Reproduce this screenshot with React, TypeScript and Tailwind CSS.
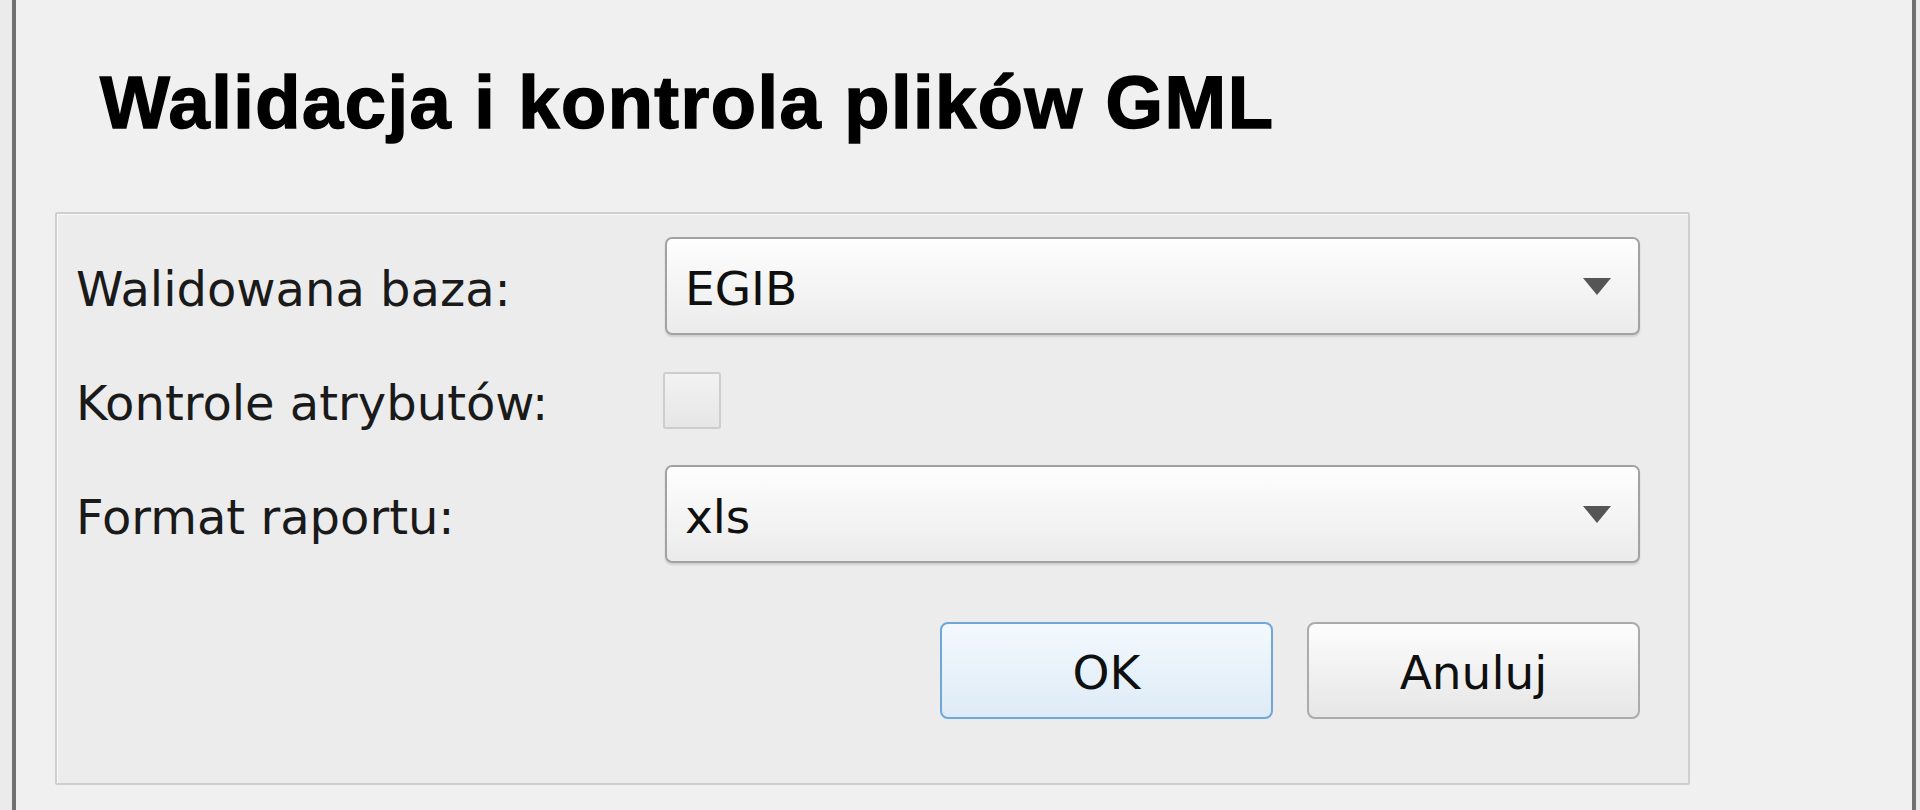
import { ChevronDown } from "lucide-react";

// Drop-down box in the classic Windows look
function Combo({ value }: { value: string }) {
  return (
    <div className="flex h-[98px] w-full items-center justify-between rounded-[7px] border-2 border-[#a2a2a2] bg-gradient-to-b from-[#fefefe] to-[#ebebeb] pl-[18px] pr-[27px] shadow-[0_2px_2px_rgba(0,0,0,0.12)]">
      <span className="mt-[4px] text-[47px] leading-none text-[#0f0f0f]">{value}</span>
      <svg width="28" height="17" viewBox="0 0 28 17">
        <polygon points="0,0 28,0 14,17" fill="#555555" />
      </svg>
    </div>
  );
}

export default function App() {
  return (
    <div
      className="h-[810px] w-[1920px] overflow-hidden bg-[#ebebeb] pl-[12px] pr-[4px]"
      style={{ fontFamily: '"DejaVu Sans", Verdana, sans-serif' }}
    >
      <div className="h-full border-x-4 border-[#717171] bg-[#f0f0f0] pl-[39px] pt-[66px]">
        {/* Dialog title */}
        <h1
          className="h-[74px] pl-[45px] text-[74px] font-bold leading-[74px] tracking-[1.5px] text-black [-webkit-text-stroke:1.5px_black]"
          style={{ fontFamily: '"Liberation Sans", Arial, sans-serif' }}
        >
          Walidacja i kontrola plików GML
        </h1>

        {/* Group box */}
        <div className="mt-[72px] h-[573px] w-[1635px] rounded-[2px] border-2 border-[#cfcfcf] bg-[#ececec] pl-[19px] pr-[48px] pt-[23px] shadow-[inset_1px_1px_0_#fafafa]">
          <div className="grid grid-cols-[589px_1fr] gap-y-[15px] text-[48px] text-[#1a1a1a]">
            <div className="flex h-[98px] items-center pt-[6px]">Walidowana baza:</div>
            <Combo value="EGIB" />

            <div className="flex h-[100px] items-center pt-[6px]">Kontrole atrybutów:</div>
            <div className="flex h-[100px] items-center">
              <div className="-ml-[2px] h-[57px] w-[58px] rounded-[3px] border-2 border-[#cdcdcd] bg-gradient-to-b from-[#f2f2f2] to-[#e6e6e6]" />
            </div>

            <div className="flex h-[98px] items-center pt-[6px]">Format raportu:</div>
            <Combo value="xls" />
          </div>

          <div className="mt-[59px] flex justify-end gap-[34px]">
            <button className="flex h-[97px] w-[333px] items-center justify-center rounded-[8px] border-2 border-[#6fa7d8] bg-gradient-to-b from-[#f3f9fe] to-[#deebf6] pt-[4px] text-[47px] leading-none text-[#0f0f0f]">
              OK
            </button>
            <button className="flex h-[97px] w-[333px] items-center justify-center rounded-[8px] border-2 border-[#ababab] bg-gradient-to-b from-[#fdfdfd] to-[#e6e6e6] pt-[4px] text-[47px] leading-none text-[#0f0f0f]">
              Anuluj
            </button>
          </div>
        </div>
      </div>
    </div>
  );
}
